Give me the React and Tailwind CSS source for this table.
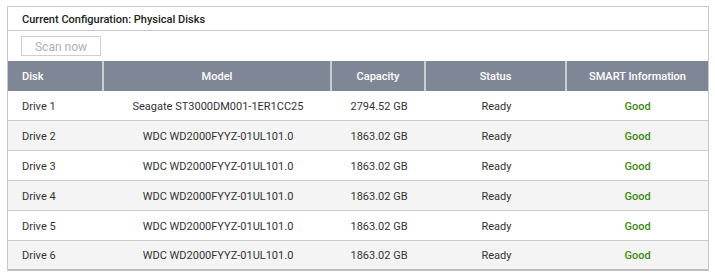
import React from "react";

const rows = [
  ["Drive 1", "Seagate ST3000DM001-1ER1CC25", "2794.52 GB"],
  ["Drive 2", "WDC WD2000FYYZ-01UL101.0", "1863.02 GB"],
  ["Drive 3", "WDC WD2000FYYZ-01UL101.0", "1863.02 GB"],
  ["Drive 4", "WDC WD2000FYYZ-01UL101.0", "1863.02 GB"],
  ["Drive 5", "WDC WD2000FYYZ-01UL101.0", "1863.02 GB"],
  ["Drive 6", "WDC WD2000FYYZ-01UL101.0", "1863.02 GB"],
];

const cols = "grid grid-cols-[96px_228px_94px_141px_141px]";

export default function App() {
  return (
    <div className="w-[715px] h-[279px] bg-white pt-[6px] pl-[7px] text-[11px] text-[#333]" style={{ fontFamily: "Roboto, 'Liberation Sans', sans-serif" }}>
      <div className="w-[702px] border border-[#c8c8c8] border-b-0">
        <div className="h-[24px] flex items-center pl-[14px] pt-[3px] font-medium text-[#222] border-b border-[#c8c8c8]">
          Current Configuration: Physical Disks
        </div>
        <div className="h-[30px] flex items-center pl-[13px]">
          <div className="w-[80px] h-[20px] border border-[#cfcfcf] flex items-center justify-center pt-[1px] text-[12px] text-[#b0b0b0]">
            Scan now
          </div>
        </div>
        <div className={`${cols} h-[30px] bg-[#7f8797] text-white font-medium`}>
          <div className="flex items-center pl-[14px] pt-[3px] border-r-2 border-[#c9ccd2]">Disk</div>
          <div className="flex items-center justify-center pt-[3px] border-r-2 border-[#c9ccd2]">Model</div>
          <div className="flex items-center justify-center pt-[3px] border-r-2 border-[#c9ccd2]">Capacity</div>
          <div className="flex items-center justify-center pt-[3px] border-r-2 border-[#c9ccd2]">Status</div>
          <div className="flex items-center justify-center pt-[3px]">SMART Information</div>
        </div>
        {rows.map((r, i) => (
          <div
            key={i}
            className={`${cols} h-[30px] border-b ${i === rows.length - 1 ? "border-b-2 border-[#bdbdbd]" : "border-[#cccccc]"} ${i % 2 === 1 ? "bg-[#f4f4f4]" : "bg-white"}`}
          >
            <div className="flex items-center pl-[14px] pt-[3px]">{r[0]}</div>
            <div className="flex items-center justify-center pt-[3px]">{r[1]}</div>
            <div className="flex items-center justify-center pt-[3px]">{r[2]}</div>
            <div className="flex items-center justify-center pt-[3px]">Ready</div>
            <div className="flex items-center justify-center pt-[3px] font-medium text-[#3c8a12]">Good</div>
          </div>
        ))}
      </div>
    </div>
  );
}
